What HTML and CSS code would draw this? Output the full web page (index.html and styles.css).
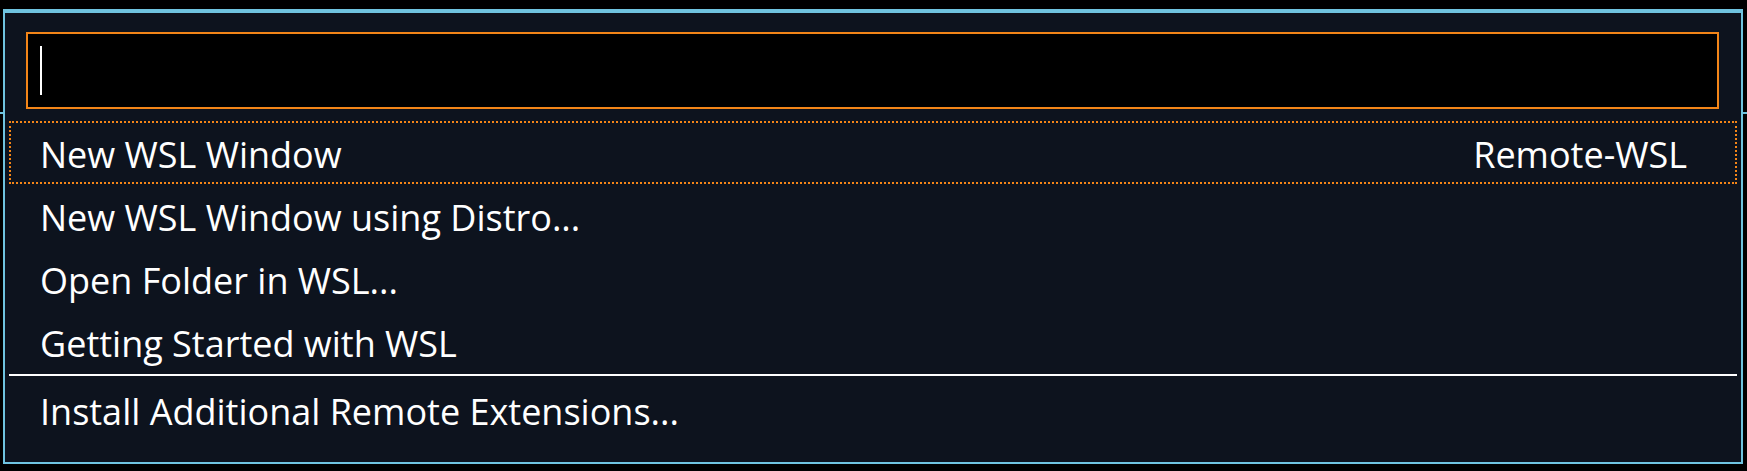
FILE: index.html
```html
<!DOCTYPE html>
<html lang="en">
<head>
<meta charset="utf-8">
<title>Quick Pick</title>
<link rel="stylesheet" href="styles.css">
</head>
<body>
<div class="workbench">
  <div class="titlebar"></div>
  <div class="editor"></div>
  <div class="quick-input">
    <div class="input-box"><span class="caret"></span></div>
    <div class="list">
      <div class="row focused"><span class="label">New WSL Window</span><span class="detail">Remote-WSL</span></div>
      <div class="row"><span class="label">New WSL Window using Distro...</span></div>
      <div class="row"><span class="label">Open Folder in WSL...</span></div>
      <div class="row"><span class="label">Getting Started with WSL</span></div>
      <div class="separator"></div>
      <div class="row"><span class="label">Install Additional Remote Extensions...</span></div>
    </div>
  </div>
</div>
</body>
</html>
```
FILE: styles.css
```css
html, body {
  margin: 0;
  padding: 0;
  background: #000;
  width: 1747px;
  height: 471px;
  overflow: hidden;
}

.workbench {
  position: relative;
  width: 1747px;
  height: 471px;
  background: #000;
}

.titlebar {
  height: 112px;
  border-bottom: 2px solid #6fc3df;
}

.editor {
  height: 357px;
}

.quick-input {
  position: absolute;
  left: 3px;
  top: 9px;
  width: 1736px;
  height: 430px;
  border: 2px solid #6fc3df;
  border-top-width: 4px;
  background: #0d131e;
  padding-top: 19px;
  box-sizing: content-box;
  font-family: "Open Sans", "Noto Sans", sans-serif;
  color: #ffffff;
}

.input-box {
  margin: 0 22px 0 21px;
  height: 73px;
  border: 2px solid #f38518;
  background: #000;
  display: flex;
  align-items: center;
  padding-left: 12px;
}

.caret {
  display: block;
  width: 2px;
  height: 49px;
  background: #ffffff;
}

.list {
  margin: 12px 4px 0 4px;
}

.row {
  box-sizing: border-box;
  height: 63px;
  padding: 4px 50px 0 31px;
  line-height: 59px;
  font-size: 36px;
  display: flex;
  justify-content: space-between;
  white-space: nowrap;
}

.row.focused {
  outline: 2px dotted #f38518;
  outline-offset: -2px;
}

.separator {
  height: 2px;
  margin: 1px 0 2px;
  background: #ffffff;
}
```
